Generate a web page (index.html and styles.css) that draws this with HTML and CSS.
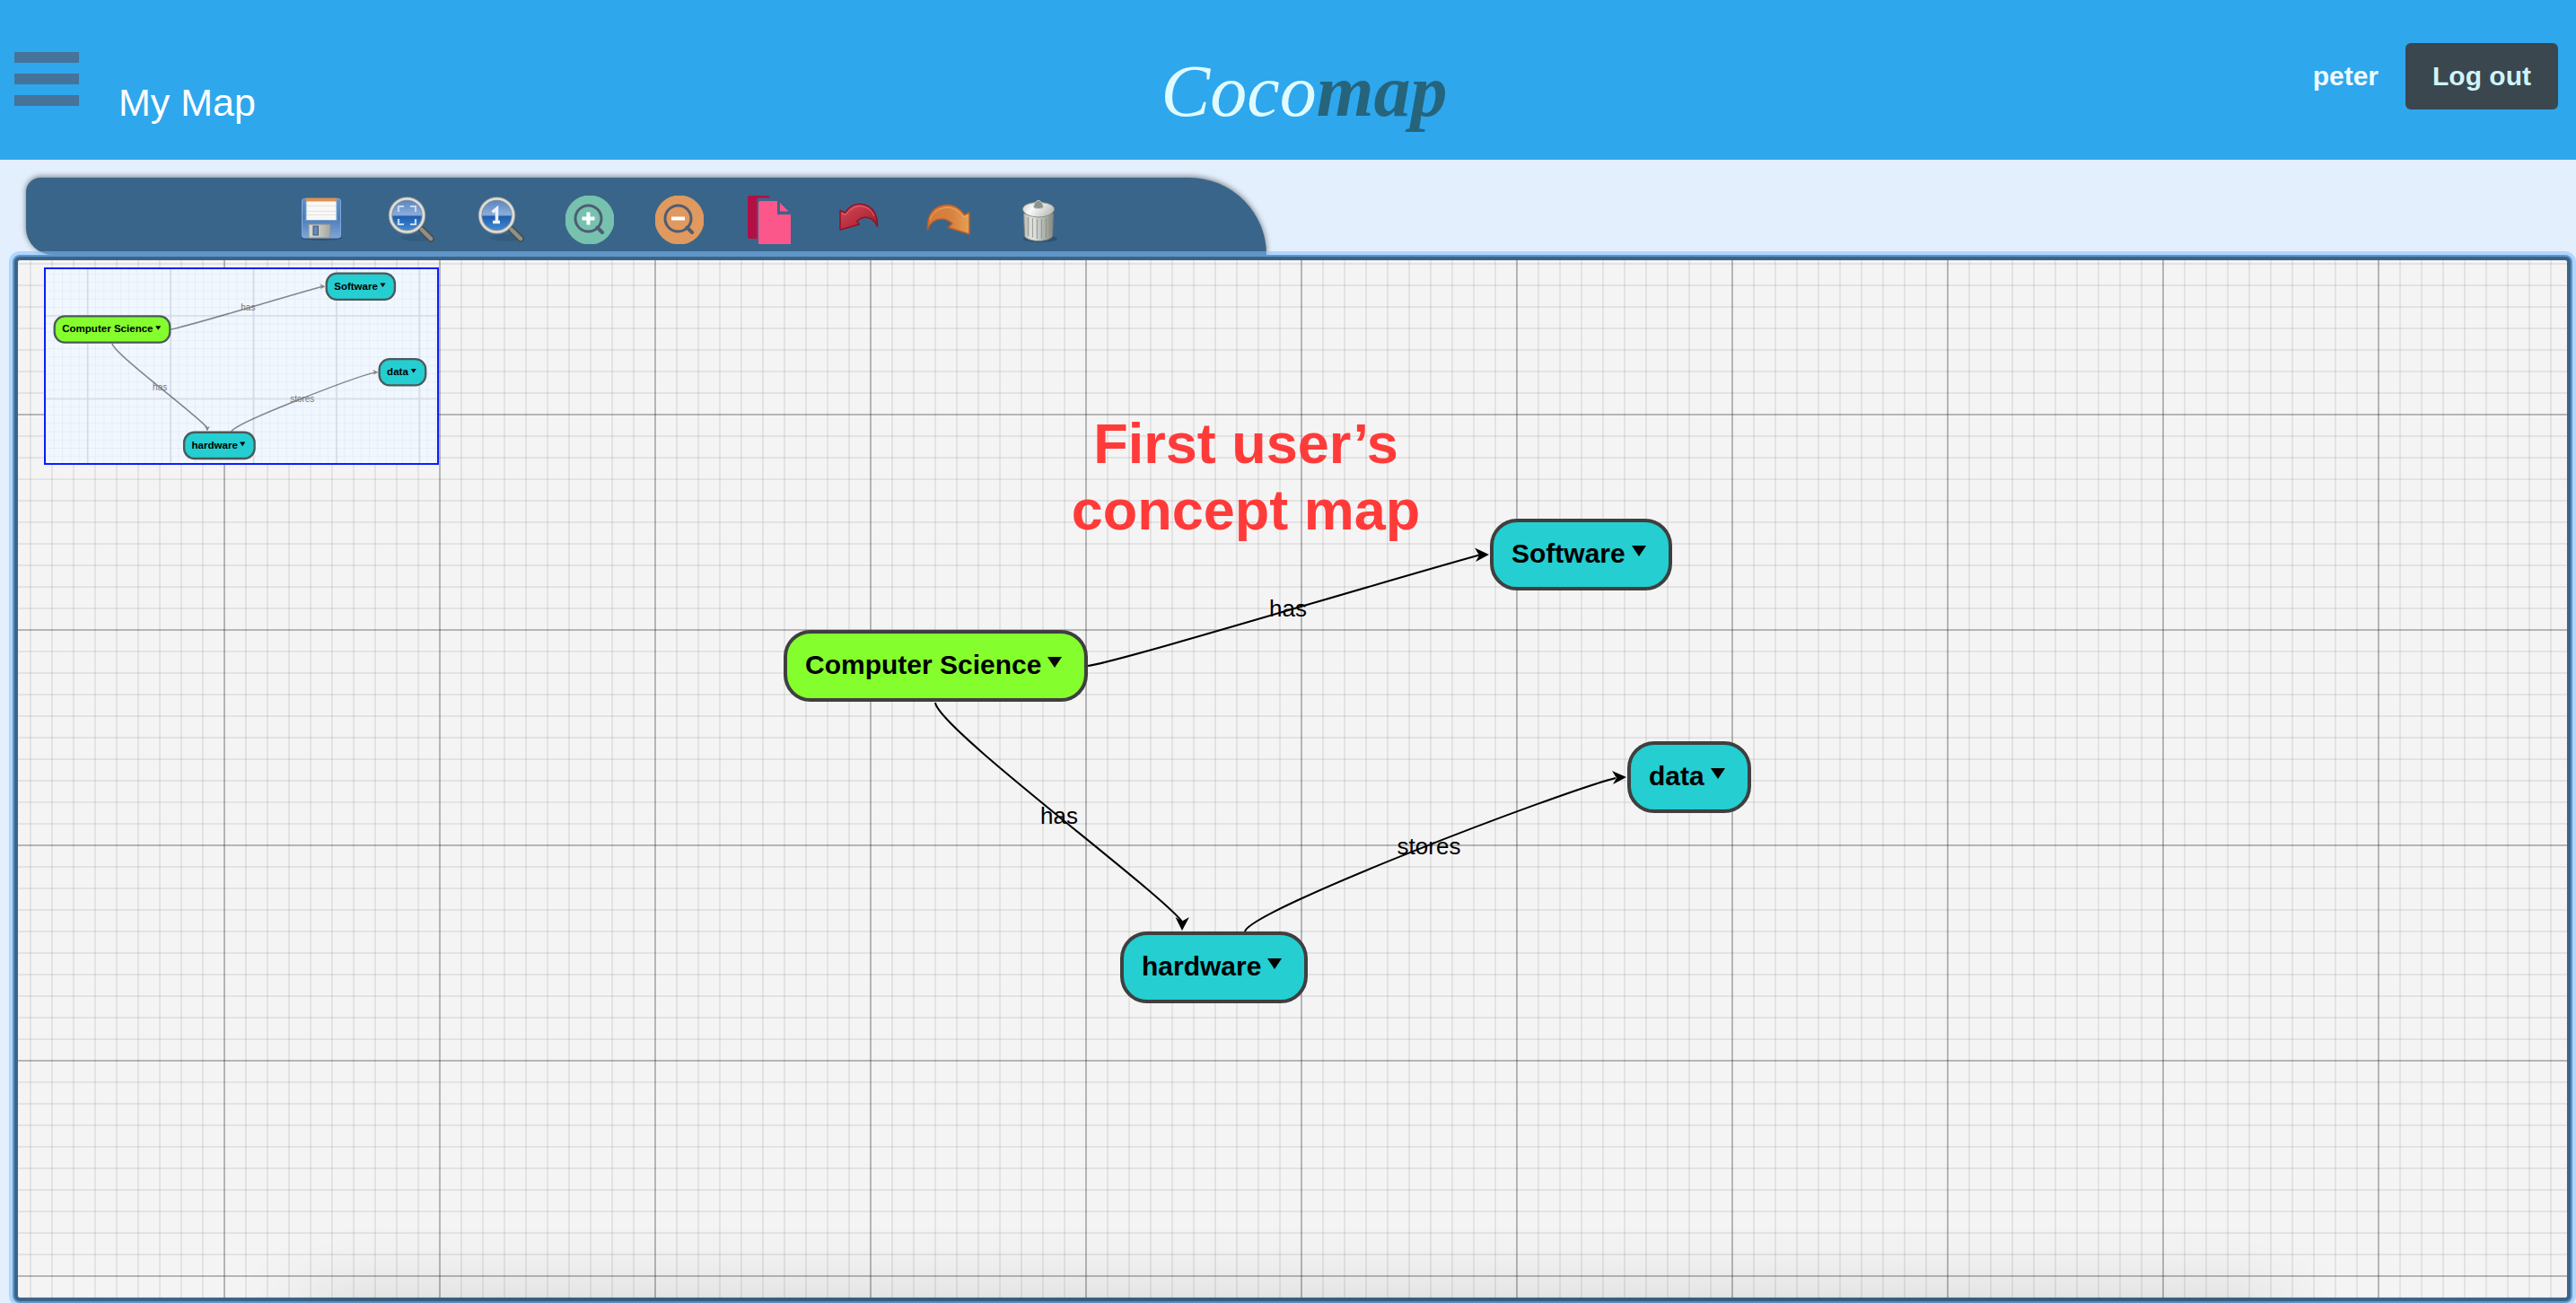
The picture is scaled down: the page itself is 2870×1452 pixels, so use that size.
FILE: index.html
```html
<!DOCTYPE html>
<html lang="en">
<head>
<meta charset="utf-8">
<meta name="viewport" content="width=device-width, initial-scale=1">
<title>My Map - Cocomap</title>
<link rel="stylesheet" href="styles.css">
</head>
<body>
<header class="header">
  <div class="header-left">
    <button class="menu" type="button" aria-label="Menu"><span class="bar"></span><span class="bar"></span><span class="bar"></span></button>
    <h1 class="title">My Map</h1>
  </div>
  <div class="logo"><span class="logo-coco">Coco</span><span class="logo-map">map</span></div>
  <div class="header-right">
    <a class="user" href="#">peter</a>
    <button class="logout" type="button">Log out</button>
  </div>
</header>

<nav class="toolbar" aria-label="Map tools">
  <button class="tool" type="button" aria-label="Save">
    <svg viewBox="0 0 54 54">
      <defs>
        <linearGradient id="disk" x1="0" y1="0" x2="0" y2="1"><stop offset="0" stop-color="#5f8fcb"/><stop offset="0.5" stop-color="#4a7dbb"/><stop offset="1" stop-color="#7ba6d8"/></linearGradient>
        <linearGradient id="metal" x1="0" y1="0" x2="1" y2="0"><stop offset="0" stop-color="#d6d8d2"/><stop offset="0.6" stop-color="#bfc2bb"/><stop offset="1" stop-color="#a3a69f"/></linearGradient>
      </defs>
      <ellipse cx="28" cy="47" rx="23" ry="3" fill="#1c3a58" opacity="0.45"/>
      <rect x="6.500" y="3.500" width="43" height="43.500" rx="2.500" fill="url(#disk)" stroke="#7fa8d8"/>
      <rect x="11" y="3" width="34" height="24.500" fill="#f8f8f7" stroke="#7d9fc8"/>
      <rect x="11" y="3" width="34" height="3.500" fill="#e98f45"/>
      <path d="M12 11.500h32M12 17.500h32M12 21.500h32" stroke="#e2e3e1"/>
      <rect x="14" y="32" width="24" height="15" fill="url(#metal)" stroke="#8c9296"/>
      <rect x="19" y="34" width="5.500" height="10" fill="#5f8bc0" stroke="#47586a"/>
    </svg>
  </button>
  <button class="tool" type="button" aria-label="Fit to screen">
    <svg viewBox="0 0 54 54">
      <defs>
        <linearGradient id="lens" x1="0" y1="0" x2="0" y2="1"><stop offset="0" stop-color="#5581bd"/><stop offset="0.48" stop-color="#8badda"/><stop offset="0.54" stop-color="#1f5fae"/><stop offset="1" stop-color="#4490dc"/></linearGradient>
        <g id="magnifier">
          <ellipse cx="34" cy="47" rx="18" ry="4" fill="#1c3a58" opacity="0.2"/>
          <path d="M40 38L50 48" stroke="#4c4f4d" stroke-width="8" stroke-linecap="round"/>
          <path d="M40 38L50 48" stroke="#8d908b" stroke-width="4.500" stroke-linecap="round"/>
          <circle cx="23.500" cy="22" r="18.500" fill="url(#lens)" stroke="#8b9295" stroke-width="4.500"/>
          <circle cx="23.500" cy="22" r="18.500" fill="none" stroke="#dcdfdc" stroke-width="2.600"/>
        </g>
      </defs>
      <use href="#magnifier"/>
      <path d="M14 18v-6h6M27 12h6v6M33 26v6h-6M20 32h-6v-6" fill="none" stroke="#c3dbf6" stroke-width="2.200"/>
    </svg>
  </button>
  <button class="tool" type="button" aria-label="Actual size">
    <svg viewBox="0 0 54 54"><use href="#magnifier"/><path d="M18.500 18.500L23.500 14.500V29.500M19 29.500h8" fill="none" stroke="#edf3fb" stroke-width="3.500"/></svg>
  </button>
  <button class="tool" type="button" aria-label="Zoom in">
    <svg viewBox="0 0 54 54"><circle cx="27" cy="27" r="27.500" fill="#76c2af"/><circle cx="25.500" cy="25.500" r="14.500" fill="none" stroke="#4f5d73" stroke-width="3"/><path d="M35.500 35.500L41 41" stroke="#4f5d73" stroke-width="4" stroke-linecap="round"/><path d="M18.500 25.500h14M25.500 18.500v14" stroke="#fff" stroke-width="4"/></svg>
  </button>
  <button class="tool" type="button" aria-label="Zoom out">
    <svg viewBox="0 0 54 54"><circle cx="27" cy="27" r="27.500" fill="#e0995e"/><circle cx="25.500" cy="25.500" r="14.500" fill="none" stroke="#4f5d73" stroke-width="3"/><path d="M35.500 35.500L41 41" stroke="#4f5d73" stroke-width="4" stroke-linecap="round"/><path d="M18 25.500h15" stroke="#fff" stroke-width="4"/></svg>
  </button>
  <button class="tool" type="button" aria-label="Copy">
    <svg viewBox="0 0 54 54"><path d="M5 0H26Q28 0 28 2.500H13.500V48H5Q3 48 3 46V2Q3 0 5 0Z" fill="#b30f44"/><path d="M17 6H36V21H51V54H15V8Q15 6 17 6Z" fill="#fb578a"/><path d="M39 8L48.500 17.500H39Z" fill="#fb578a"/></svg>
  </button>
  <button class="tool" type="button" aria-label="Undo">
    <svg viewBox="0 0 54 54">
      <defs><linearGradient id="undo" x1="0" y1="0" x2="1" y2="1"><stop offset="0" stop-color="#d34a5a"/><stop offset="1" stop-color="#a51729"/></linearGradient></defs>
      <path d="M6 16.500L11.500 19C17 11 24 8.500 30.500 9.500C42 11 48 21 47.500 34.500C43.500 24.500 34 20.500 24.500 28.500L27.500 32L6 38Z" fill="url(#undo)" stroke="#8e1425" stroke-width="1.500" stroke-linejoin="round"/>
      <path d="M8 19.500L12 21.500C18 13 25 11 30.500 12C37 13 41.500 17 44 23" fill="none" stroke="#e8808b" opacity="0.7"/>
    </svg>
  </button>
  <button class="tool" type="button" aria-label="Redo">
    <svg viewBox="0 0 54 54">
      <defs><linearGradient id="redo" x1="0" y1="0" x2="1" y2="0"><stop offset="0" stop-color="#d47a35"/><stop offset="0.6" stop-color="#d98242"/><stop offset="1" stop-color="#e2a254"/></linearGradient></defs>
      <path d="M50 19L44.500 21.500C39 14 31 9.500 23 10.500C9.500 12 2.500 22 3.500 38C7 26.500 20 21.500 31 31L26.500 35.500L50 43Z" fill="url(#redo)" stroke="#b95e27" stroke-width="1.500" stroke-linejoin="round"/>
      <path d="M48 22L44 24C37 15.500 30 12.500 23 13.500C14 15 8.500 19.500 6 27" fill="none" stroke="#f0b87a" opacity="0.7"/>
    </svg>
  </button>
  <button class="tool" type="button" aria-label="Delete">
    <svg viewBox="0 0 54 54">
      <defs>
        <linearGradient id="can" x1="0" y1="0" x2="1" y2="0"><stop offset="0" stop-color="#b7bab4"/><stop offset="0.3" stop-color="#e7e9e5"/><stop offset="1" stop-color="#858a82"/></linearGradient>
        <linearGradient id="lid" x1="0" y1="0" x2="1" y2="0.400"><stop offset="0" stop-color="#c9cbc7"/><stop offset="0.4" stop-color="#fafafa"/><stop offset="1" stop-color="#c0c3bd"/></linearGradient>
      </defs>
      <ellipse cx="29" cy="48" rx="19" ry="4" fill="#1c3a58" opacity="0.45"/>
      <path d="M10.500 20L11.500 45C12 48 20 50.500 27 50.500S42 48 42.500 45L43.500 20Z" fill="url(#can)" stroke="#7d827b"/>
      <path d="M15.500 24V45M20.500 25V47M25.500 26V48M30.500 26V48M35.500 25V47M39.500 24V45" stroke="#8e938b" stroke-width="1.300" opacity="0.8"/>
      <path d="M9.500 15C9.500 10 18 7.500 27 7.500S44.500 10 44.500 15C44.500 20 36 24 27 24S9.500 20 9.500 15Z" fill="url(#lid)" stroke="#868b84"/>
      <path d="M21.500 13C22 8 25 5.500 27 5.500S32 8 32.500 13C30 15 24 15 21.500 13Z" fill="#8f938e" stroke="#cfd2cd"/>
    </svg>
  </button>
</nav>

<main class="map" tabindex="0">
  <svg class="edges" aria-hidden="true">
    <defs>
      <g id="links">
        <path class="edge" d="M1192 452C1232 446 1500 364 1630 328"/>
        <path class="edge" d="M1022 493C1026 522 1270 702 1297 737"/>
        <path class="edge" d="M1367 748C1373 724 1720 592 1780 577"/>
        <path d="M1639 328L1623 320.500L1628 329L1624 336Z"/>
        <path d="M1297 747L1289.500 732L1297 736.500L1305 732Z"/>
        <path d="M1792 576L1776 569L1781 577L1777 584Z"/>
      </g>
    </defs>
    <use href="#links"/>
    <text class="edge-label" x="1415" y="397">has</text>
    <text class="edge-label" x="1160" y="628">has</text>
    <text class="edge-label" x="1572" y="662">stores</text>
  </svg>

  <p class="caption">First user’s<br>concept map</p>

  <button type="button" class="node node-root">Computer Science<span class="caret"></span></button>
  <button type="button" class="node node-software">Software<span class="caret"></span></button>
  <button type="button" class="node node-data">data<span class="caret"></span></button>
  <button type="button" class="node node-hardware">hardware<span class="caret"></span></button>

  <svg class="overview" viewBox="830 278 1132 561" aria-label="Overview">
    <defs>
      <pattern id="mini-minor" x="13" y="3" width="24" height="24" patternUnits="userSpaceOnUse"><path d="M0 1H24M1 0V24" stroke="#e3eaf4" stroke-width="2"/></pattern>
      <pattern id="mini-major" x="229" y="171" width="240" height="240" patternUnits="userSpaceOnUse"><path d="M0 2H240M2 0V240" stroke="#d3d9e2" stroke-width="4"/></pattern>
    </defs>
    <rect x="830" y="278" width="1132" height="561" fill="url(#mini-minor)"/>
    <rect x="830" y="278" width="1132" height="561" fill="url(#mini-major)"/>
    <use href="#links" opacity="0.45"/>
    <g class="mini-labels">
      <text x="1415" y="397">has</text>
      <text x="1160" y="628">has</text>
      <text x="1572" y="662">stores</text>
    </g>
    <g class="mini-nodes">
      <rect class="mini-root" x="855" y="414" width="334" height="76" rx="30"/>
      <rect x="1642" y="290" width="198" height="76" rx="30"/>
      <rect x="1795" y="538" width="134" height="76" rx="30"/>
      <rect x="1230" y="750" width="204" height="76" rx="30"/>
    </g>
    <g class="mini-text">
      <text x="877" y="461">Computer Science</text>
      <text x="1664" y="337">Software</text>
      <text x="1817" y="585">data</text>
      <text x="1252" y="797">hardware</text>
    </g>
    <path d="M1147 442h16l-8 12zM1797 318h16l-8 12zM1886 566h16l-8 12zM1391 778h16l-8 12z"/>
  </svg>
</main>
</body>
</html>
```

FILE: styles.css
```css
* { box-sizing: border-box; }

body {
  margin: 0;
  min-height: 100vh;
  display: flex;
  flex-direction: column;
  background: #e3effc;
  font-family: "Liberation Sans", Arial, Helvetica, sans-serif;
  overflow: hidden;
}

button {
  font: inherit;
  border: 0;
  padding: 0;
  background: none;
  cursor: pointer;
}

/* Header */
.header {
  display: grid;
  grid-template-columns: 1fr auto 1fr;
  align-items: start;
  height: 178px;
  padding: 48px 20px 0 16px;
  background: #2ea7ed;
}

.header-left {
  display: flex;
  align-items: flex-start;
  gap: 44px;
  padding-top: 10px;
}

.menu {
  display: flex;
  flex-direction: column;
  gap: 12px;
  width: 72px;
}

.bar {
  height: 12px;
  background: #45739a;
}

.title {
  margin: 32px 0 0;
  font-size: 43px;
  line-height: 48px;
  font-weight: 400;
  color: #fff;
}

.logo {
  padding: 8px 0 0 40px;
  font-family: "Liberation Serif", "Times New Roman", serif;
  font-style: italic;
  font-size: 82px;
  line-height: 92px;
}

.logo-coco { color: #e0fbff; }

.logo-map {
  color: #26647c;
  font-weight: 700;
}

.header-right {
  display: flex;
  justify-content: flex-end;
  align-items: center;
  gap: 30px;
  font-size: 30px;
  font-weight: 700;
}

.user {
  color: #f0fafe;
  text-decoration: none;
}

.logout {
  height: 74px;
  padding: 0 30px;
  border-radius: 6px;
  background: #3a474e;
  color: #cff3fb;
}

/* Toolbar */
.toolbar {
  display: flex;
  align-self: flex-start;
  gap: 46px;
  margin: 20px 0 0 29px;
  padding: 20px 227px 12px 301px;
  background: #3a658a;
  border-radius: 16px 86px 0 30px;
  box-shadow: 0 -1px 6px rgba(0, 0, 0, 0.5);
}

.tool {
  width: 54px;
  height: 54px;
}

.tool svg {
  display: block;
  width: 100%;
  height: 100%;
}

/* Map canvas */
.map {
  position: relative;
  flex: 1;
  margin: 0 4px 0 14px;
  border: 6px solid #3a658a;
  border-radius: 8px;
  outline: 6px solid rgba(130, 192, 255, 0.53);
  outline-offset: -2px;
  background-color: #f4f4f4;
  background-image:
    linear-gradient(to right, rgba(0, 0, 0, 0.07) 2px, transparent 2px),
    linear-gradient(to right, rgba(0, 0, 0, 0.2) 2px, transparent 2px),
    linear-gradient(to bottom, rgba(0, 0, 0, 0.2) 2px, transparent 2px),
    linear-gradient(to bottom, rgba(0, 0, 0, 0.07) 2px, transparent 2px);
  background-size: 24px 24px, 240px 240px, 240px 240px, 24px 24px;
  background-position: 13px 3px, 229px 171px, 229px 171px, 13px 3px;
}

/* Soft shade rising from the bottom edge of the window */
.map::after {
  content: "";
  position: absolute;
  left: 340px;
  right: 340px;
  bottom: -46px;
  height: 20px;
  box-shadow: 0 0 90px 20px rgba(0, 0, 0, 0.16);
  pointer-events: none;
}

.edges {
  position: absolute;
  inset: 0;
  width: 100%;
  height: 100%;
}

.edge {
  fill: none;
  stroke: #000;
  stroke-width: var(--edge-width, 2px);
}

.edge-label {
  font-size: 26px;
  text-anchor: middle;
}

.caption {
  position: absolute;
  left: 1168px;
  top: 167px;
  width: 400px;
  margin: 0;
  font-size: 63px;
  line-height: 74px;
  font-weight: 700;
  text-align: center;
  color: #ff3b3a;
}

.node {
  position: absolute;
  display: flex;
  align-items: center;
  gap: 7px;
  height: 80px;
  padding: 0 25px 2px 20px;
  border: 4px solid #3f3f3f;
  border-radius: 30px;
  background: #24ced1;
  color: #000;
  font-size: 30px;
  font-weight: 700;
  white-space: nowrap;
}

.node-root { left: 853px; top: 412px; background: #84ff2d; }
.node-software { left: 1640px; top: 288px; }
.node-data { left: 1793px; top: 536px; }
.node-hardware { left: 1228px; top: 748px; }

.caret {
  margin-bottom: 6px;
  border: 8px solid transparent;
  border-top: 12px solid #000;
  border-bottom: 0;
}

/* Overview */
.overview {
  --edge-width: 4px;
  position: absolute;
  left: 29px;
  top: 8px;
  width: 440px;
  height: 220px;
  border: 2px solid #0a1eff;
  background: #f0f7ff;
}

.mini-labels {
  font-size: 26px;
  fill: #777;
  text-anchor: middle;
}

.mini-nodes {
  fill: #24ced1;
  stroke: #4a5a5a;
  stroke-width: 6px;
}

.mini-root { fill: #84ff2d; }

.mini-text {
  font-size: 30px;
  font-weight: 700;
}
```
